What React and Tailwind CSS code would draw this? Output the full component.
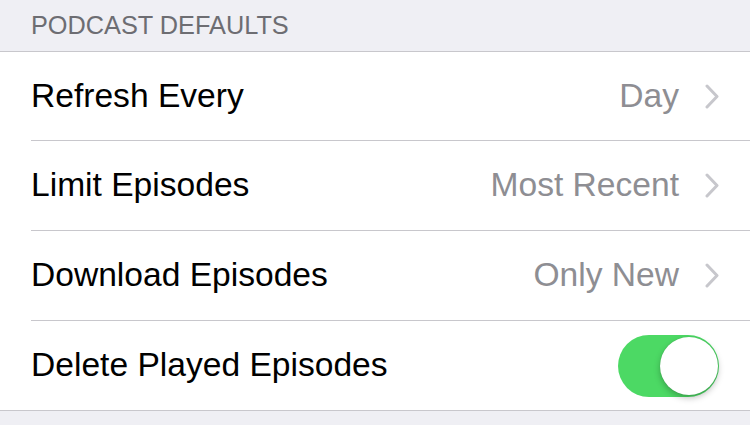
import React from "react";

const font = { fontFamily: '"Liberation Sans", Arial, sans-serif' };

function Chevron() {
  return (
    <svg width="14" height="25" viewBox="0 0 14 25" className="ml-[26px]">
      <path d="M2 2 L12 12.5 L2 23" fill="none" stroke="#c7c7cc" strokeWidth="3" strokeLinecap="round" strokeLinejoin="round" />
    </svg>
  );
}

function Row({ label, value, last, first, children }) {
  return (
    <div className={`flex items-center pl-[31px] ${first || last ? "h-[89px]" : "h-[90px]"}`}>
      <div className={`flex items-center h-full flex-1 pr-[31px] ${last ? "" : "border-b border-[#c8c7cc]"}`}>
        <span className="text-[33.6px] text-black flex-1">{label}</span>
        {value && <span className="text-[33.6px] text-[#8e8e93]">{value}</span>}
        {value && <Chevron />}
        {children}
      </div>
    </div>
  );
}

function Toggle() {
  return (
    <div className="relative w-[101px] h-[62px] rounded-full bg-[#4cd964]">
      <div className="absolute right-[1px] top-[2px] w-[58px] h-[58px] rounded-full bg-white shadow-[0_3px_6px_rgba(0,0,0,0.25),0_0_1px_rgba(0,0,0,0.2)]" />
    </div>
  );
}

export default function App() {
  return (
    <div className="w-[750px] h-[425px] bg-[#efeff4] overflow-hidden" style={font}>
      <div className="h-[51px] flex items-end pl-[31px] pb-[13px]">
        <span className="text-[25.3px] text-[#6d6d72] leading-none">PODCAST DEFAULTS</span>
      </div>
      <div className="bg-white border-y border-[#c8c7cc]">
        <Row first label="Refresh Every" value="Day" />
        <Row label="Limit Episodes" value="Most Recent" />
        <Row label="Download Episodes" value="Only New" />
        <Row last label="Delete Played Episodes">
          <Toggle />
        </Row>
      </div>
    </div>
  );
}
